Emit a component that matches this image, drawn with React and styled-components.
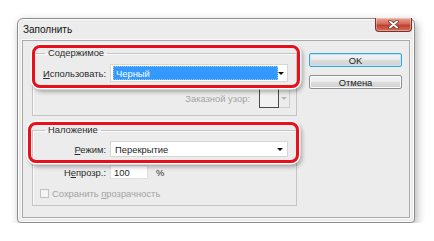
import React from "react";
import styled, { createGlobalStyle } from "styled-components";

const GlobalStyle = createGlobalStyle`
  html, body {
    margin: 0;
    padding: 0;
    background: #ffffff;
  }
  body {
    font-family: "Liberation Sans", Arial, sans-serif;
    font-size: 9.4px;
    color: #1e1e1e;
  }
`;

// page wrapper puts the dialog where it sits in the shot
const Page = styled.div`
  padding: 18px 0 0 17px;
`;

const Window = styled.div`
  width: 398px;
  height: 205px;
  box-sizing: border-box;
  display: flex;
  flex-direction: column;
  background: #ececec;
  border: 1px solid #8e8e8e;
  border-radius: 6px 6px 4px 4px;
  box-shadow: inset 0 0 0 1px #fbfbfb, 2px 3px 9px rgba(0, 0, 0, 0.3);
`;

const TitleBar = styled.div`
  height: 21px;
  display: flex;
  align-items: flex-start;
  justify-content: space-between;
  padding-left: 5px;
`;

const Title = styled.span`
  margin-top: 5px;
  font-size: 10px;
  color: #111;
`;

const CloseButton = styled.div`
  width: 37px;
  height: 14px;
  margin-right: 2px;
  margin-top: -1px;
  box-sizing: border-box;
  display: flex;
  align-items: center;
  justify-content: center;
  border: 1px solid #7d3128;
  border-top: none;
  border-radius: 0 0 4px 4px;
  background: linear-gradient(#e9a294 0%, #d46b5b 45%, #c0402c 55%, #d2705c 100%);
  box-shadow: inset 0 0 0 1px rgba(255, 255, 255, 0.35);
`;

const Client = styled.div`
  flex: 1;
  margin: 0 4px 4px 4px;
  box-sizing: border-box;
  border: 1px solid #a9a9a9;
  box-shadow: 0 0 0 1px #fafafa;
  background: #ececec;
  display: grid;
  grid-template-columns: 265px 93px;
  column-gap: 12px;
  align-items: start;
  padding: 6px 7px 0 9px;
`;

const LeftColumn = styled.div`
  display: flex;
  flex-direction: column;
  gap: 8px;
`;

const GroupWrap = styled.div`
  position: relative;
`;

const Group = styled.fieldset`
  margin: 0;
  padding: ${(p) => p.$pad};
  border: 1px solid #c4c4c4;
  box-shadow: inset 1px 1px 0 #fafafa;
  display: flex;
  flex-direction: column;
  gap: ${(p) => p.$gap}px;
  min-width: 0;
`;

const Legend = styled.legend`
  margin-left: 12px;
  padding: 0 3px;
  line-height: 12px;
  color: #2a2a2a;
`;

const Highlight = styled.div`
  position: absolute;
  left: ${(p) => p.$left}px;
  top: ${(p) => p.$top}px;
  width: ${(p) => p.$w}px;
  height: ${(p) => p.$h}px;
  box-sizing: border-box;
  border: 3px solid #e8101a;
  border-radius: 8px;
  box-shadow: 0 0 0 1.5px #ffffff, 2px 3px 4px 1px rgba(0, 0, 0, 0.3);
  pointer-events: none;
`;

const FieldRow = styled.div`
  display: grid;
  grid-template-columns: 73px ${(p) => p.$control}px auto;
  column-gap: 4px;
  align-items: center;
`;

const Label = styled.span`
  text-align: right;
  white-space: nowrap;
  color: ${(p) => (p.$disabled ? "#a3a3a3" : "#2a2a2a")};
`;

const Key = styled.span`
  text-decoration: underline;
  text-underline-offset: 1px;
`;

const Select = styled.div`
  height: ${(p) => p.$h}px;
  box-sizing: border-box;
  display: flex;
  align-items: center;
  padding: 0 4px 0 2px;
  border: 1px solid #d6d6d6;
  background: #ffffff;
`;

const SelectValue = styled.span`
  flex: ${(p) => (p.$selected ? "0 0 161px" : "1")};
  align-self: stretch;
  display: flex;
  align-items: center;
  padding-left: 2px;
  margin: ${(p) => (p.$selected ? "1px 0" : "0")};
  background: ${(p) => (p.$selected ? "#3399ff" : "transparent")};
  color: ${(p) => (p.$selected ? "#ffffff" : "#1e1e1e")};
  border: ${(p) => (p.$selected ? "1px dotted #9cc8f5" : "none")};
`;

const Arrow = styled.span`
  margin-left: ${(p) => (p.$inline ? "0" : "auto")};
  width: 0;
  height: 0;
  border-left: 3px solid transparent;
  border-right: 3px solid transparent;
  border-top: 3px solid ${(p) => (p.$disabled ? "#b5b5b5" : "#111")};
`;

const PatternRow = styled.div`
  display: flex;
  justify-content: flex-end;
  align-items: center;
  gap: 9px;
  margin-right: -2px;
`;

const PatternPicker = styled.div`
  width: 31px;
  height: 20px;
  box-sizing: border-box;
  display: flex;
  border: 1px solid #cfcfcf;
`;

const PatternSwatch = styled.div`
  width: 20px;
  height: 20px;
  box-sizing: border-box;
  border: 1px solid #4a4a4a;
  margin: -1px 0 -1px -1px;
  background: #f2f2f2;
`;

const PatternArrow = styled.div`
  flex: 1;
  display: flex;
  align-items: center;
  justify-content: center;
`;

const Input = styled.div`
  height: 14px;
  box-sizing: border-box;
  display: flex;
  align-items: center;
  padding-left: 3px;
  border: 1px solid #e0e0e0;
  background: #ffffff;
`;

const Unit = styled.span`
  padding-left: 4px;
  color: #2a2a2a;
`;

const CheckRow = styled.div`
  display: flex;
  align-items: center;
  gap: 3px;
  padding-left: 7px;
  margin-top: 1px;
  color: #a3a3a3;
`;

const CheckBox = styled.span`
  width: 9px;
  height: 9px;
  box-sizing: border-box;
  border: 1px solid #c3c3c3;
  background: #f4f4f4;
`;

const Buttons = styled.div`
  margin-top: 6px;
  display: flex;
  flex-direction: column;
  gap: 8px;
`;

const Button = styled.div`
  height: 14px;
  box-sizing: border-box;
  display: flex;
  align-items: center;
  justify-content: center;
  border: 1px solid ${(p) => (p.$default ? "#3aa6d6" : "#8f8f8f")};
  border-radius: 2px;
  background: linear-gradient(#f4f4f4 0%, #ebebeb 50%, #dcdcdc 51%, #d2d2d2 100%);
  box-shadow: inset 0 0 0 1px ${(p) => (p.$default ? "#bfe6f6" : "#fafafa")};
  color: #1a1a1a;
`;

const App = () => {
  return (
    <Page>
      <GlobalStyle />
      <Window>
        <TitleBar>
          <Title>Заполнить</Title>
          <CloseButton>
            <svg width="11" height="9" viewBox="0 0 11 9">
              <path
                d="M2 1.5 L9 7.5 M9 1.5 L2 7.5"
                stroke="#6b2b22"
                strokeWidth="3.4"
                strokeLinecap="round"
              />
              <path
                d="M2 1.5 L9 7.5 M9 1.5 L2 7.5"
                stroke="#ffffff"
                strokeWidth="2"
                strokeLinecap="round"
              />
            </svg>
          </CloseButton>
        </TitleBar>
        <Client>
          <LeftColumn>
            <GroupWrap>
              <Group $pad="5px 8px 7px 0" $gap={6}>
                <Legend>Содержимое</Legend>
                <FieldRow $control={178}>
                  <Label>
                    <Key>И</Key>спользовать:
                  </Label>
                  <Select $h={18}>
                    <SelectValue $selected>Черный</SelectValue>
                    <Arrow />
                  </Select>
                </FieldRow>
                <PatternRow>
                  <Label $disabled>Заказной узор:</Label>
                  <PatternPicker>
                    <PatternSwatch />
                    <PatternArrow>
                      <Arrow $disabled $inline />
                    </PatternArrow>
                  </PatternPicker>
                </PatternRow>
              </Group>
              <Highlight $left={0} $top={-2} $w={268} $h={43} />
            </GroupWrap>
            <GroupWrap>
              <Group $pad="5px 8px 6px 0" $gap={8}>
                <Legend>Наложение</Legend>
                <FieldRow $control={178}>
                  <Label>
                    <Key>Р</Key>ежим:
                  </Label>
                  <Select $h={16}>
                    <SelectValue>Перекрытие</SelectValue>
                    <Arrow />
                  </Select>
                </FieldRow>
                <FieldRow $control={38}>
                  <Label>
                    Н<Key>е</Key>прозр.:
                  </Label>
                  <Input>100</Input>
                  <Unit>%</Unit>
                </FieldRow>
                <CheckRow>
                  <CheckBox />
                  <span>
                    Сохранить <Key>п</Key>розрачность
                  </span>
                </CheckRow>
              </Group>
              <Highlight $left={-4} $top={-2} $w={271} $h={41} />
            </GroupWrap>
          </LeftColumn>
          <Buttons>
            <Button $default>OK</Button>
            <Button>Отмена</Button>
          </Buttons>
        </Client>
      </Window>
    </Page>
  );
};

export default App;
